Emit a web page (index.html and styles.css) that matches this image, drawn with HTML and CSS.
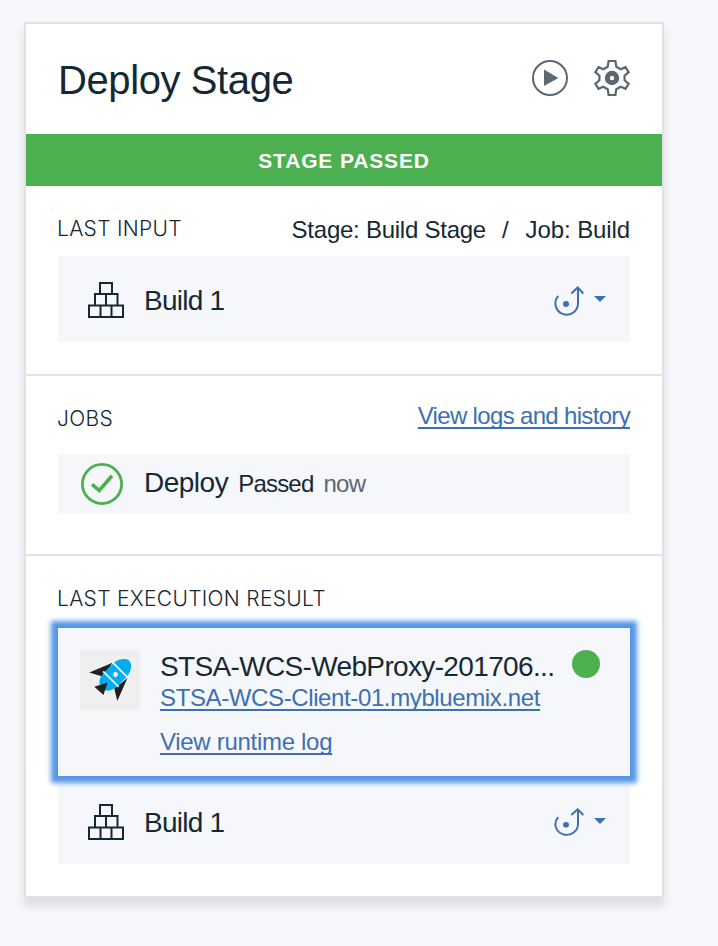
FILE: index.html
```html
<!DOCTYPE html>
<html lang="en">
<head>
<meta charset="utf-8">
<title>Deploy Stage</title>
<link rel="stylesheet" href="styles.css">
</head>
<body>
<svg width="0" height="0" class="defs" aria-hidden="true">
  <symbol id="blocks" viewBox="0 0 36 36"><path d="M12 1h12v11H12zM7 12h11v11.500H7zM18 12h11.500v11.500H18zM1 23.500h11.500V35H1zM12.500 23.500h11v11.500h-11zM23.500 23.500H35V35H23.500z" fill="none" stroke="currentColor" stroke-width="2"/></symbol>
  <symbol id="redeploy" viewBox="0 0 30 30" preserveAspectRatio="none"><path d="M4.300 9.800A11.300 11.300 0 1 0 24 17.500V2M17.300 7.500L23.700 1.500l5.600 6" fill="none" stroke="currentColor" stroke-width="2"/><circle cx="12" cy="18" r="3" fill="currentColor"/></symbol>
</svg>
<main class="card">
  <header class="head">
    <h1 class="title">Deploy Stage</h1>
    <svg class="icon play" viewBox="0 0 36 36"><circle cx="18" cy="18" r="17" fill="none" stroke="currentColor" stroke-width="2"/><path d="M12 9.500L26.300 18 12 26z" fill="currentColor"/></svg>
    <svg class="icon gear" viewBox="0 0 36 36"><path d="M14.600 1h6.800l.9 5.800 4.400 2.500 4.800-2.100 3.100 5-4 3.500v4.600l4 3.500-3.100 5-4.800-2.100-4.400 2.500-.9 5.800h-6.800l-.9-5.800-4.400-2.500-4.800 2.100-3.100-5 4-3.500v-4.600l-4-3.500 3.100-5 4.800 2.100 4.400-2.500z" fill="none" stroke="currentColor" stroke-width="2.200"/><circle cx="18" cy="18" r="4.700" fill="none" stroke="currentColor" stroke-width="5"/></svg>
  </header>
  <div class="banner">STAGE PASSED</div>
  <section class="section input">
    <div class="caption"><h2 class="label">LAST INPUT</h2><p class="source"><span class="stage">Stage: Build Stage</span><span class="slash">/</span><span class="job">Job: Build</span></p></div>
    <div class="row build">
      <svg class="blocks"><use href="#blocks"/></svg><span class="name">Build 1</span>
      <svg class="redeploy"><use href="#redeploy"/></svg><i class="caret"></i>
    </div>
  </section>
  <section class="section jobs">
    <div class="caption"><h2 class="label">JOBS</h2><a class="link history">View logs and history</a></div>
    <div class="row job-row">
      <svg class="check" viewBox="0 0 42 42"><circle cx="21" cy="21" r="19.600" fill="none" stroke="currentColor" stroke-width="2.800"/><path d="M11 21.300l7.300 6.200L31 12.800" fill="none" stroke="currentColor" stroke-width="3.600"/></svg>
      <span class="name deploy">Deploy</span><span class="status">Passed</span><span class="time">now</span>
    </div>
  </section>
  <section class="section result">
    <h2 class="label execution">LAST EXECUTION RESULT</h2>
    <div class="app">
      <svg class="rocket" viewBox="0 0 60 60"><rect width="60" height="60" rx="2" fill="#efefef"/><path d="M32.500 12.700L9.300 22.500l14 4.200zM47.500 28L34.300 38.500l3 12.500z" fill="#231f20"/><g transform="translate(35.500 24.500) rotate(45)"><path d="M-9.500-6C-9.500-12-6-17-3-18.500Q0-20.500 3-18.500C6-17 9.500-12 9.500-6V6C9.500 11 8 15 5 18H-5C-8 15-9.500 11-9.500 6z" fill="#00aeef"/><path d="M-11-6.500H11M-11 6.500H11" stroke="#efefef" stroke-width="1.800"/><circle r="2.500" fill="#efefef"/></g><path d="M27.500 32.500L14.300 36.700 23.500 45z" fill="#231f20"/></svg>
      <div class="details"><p class="name app-name">STSA-WCS-WebProxy-201706...</p><a class="link route">STSA-WCS-Client-01.mybluemix.net</a><a class="link log">View runtime log</a></div>
      <i class="dot"></i>
    </div>
    <div class="row build second">
      <svg class="blocks"><use href="#blocks"/></svg><span class="name">Build 1</span>
      <svg class="redeploy"><use href="#redeploy"/></svg><i class="caret"></i>
    </div>
  </section>
</main>
</body>
</html>
```
FILE: styles.css
```css
* { box-sizing: border-box; }
body { margin: 0; padding: 22px 0 0 24px; height: 946px; overflow: hidden; background: #f5f7fb; color: #152935; font-family: "Liberation Sans", Arial, sans-serif; }
h1, h2, p { margin: 0; font-weight: 400; }
svg { flex: none; }
.defs { position: absolute; }
.card { width: 640px; height: 876px; background: #fff; border: 2px solid #dfe3e6; box-shadow: 0 8px 8px rgba(0, 0, 0, .1); }
.head { height: 110px; padding: 0 32px; display: flex; align-items: center; color: #5a6872; }
.title { flex: 1; padding-top: 3px; font-size: 40px; letter-spacing: -.4px; color: #152935; white-space: nowrap; }
.icon { width: 36px; height: 36px; margin-bottom: 2px; }
.gear { margin-left: 26px; }
.banner { height: 52px; line-height: 54px; text-align: center; background: #4cb050; color: #fff; font-size: 21px; font-weight: 700; letter-spacing: .85px; }
.section { padding: 0 32px; }
.input { height: 190px; border-bottom: 2px solid #dfe3e6; }
.caption { display: flex; justify-content: space-between; height: 70px; line-height: 86px; white-space: nowrap; }
.label { margin-left: -1px; font-family: Inter, "Liberation Sans", sans-serif; font-weight: 300; font-size: 21px; letter-spacing: .3px; color: #152935; }
.source { display: flex; font-size: 24px; line-height: 88px; }
.stage { letter-spacing: -.25px; }
.job { letter-spacing: -.1px; }
.slash { margin: 0 17px 0 16px; }
.row { display: flex; align-items: center; background: #f5f7fb; }
.build { height: 86px; padding: 2px 24px 0 30px; }
.blocks { width: 36px; height: 36px; margin-right: 20px; color: #152935; }
.name { font-size: 28px; white-space: nowrap; letter-spacing: -.5px; }
.build .name { flex: 1; padding-top: 1px; letter-spacing: -.75px; }
.redeploy { width: 30px; height: 30px; margin: 2px 10px 0 0; color: #3d70b2; }
.caret { border: 6px solid transparent; border-top-color: #3d70b2; border-bottom: 0; margin-bottom: 3px; }
.jobs { height: 180px; border-bottom: 2px solid #dfe3e6; }
.jobs .caption { height: 78px; }
.link { color: #3d70b2; font-size: 24px; text-decoration: underline; text-decoration-thickness: 2px; text-decoration-skip-ink: none; text-underline-offset: 3px; white-space: nowrap; }
.history { line-height: 80px; letter-spacing: -.67px; }
.job-row { height: 60px; padding-left: 23px; }
.check { width: 42px; height: 42px; margin-right: 21px; color: #4cb050; }
.deploy { margin: 0 10px 2px 0; }
.status { font-size: 24px; margin-right: 10px; letter-spacing: -.8px; }
.time { font-size: 24px; letter-spacing: -.7px; color: #5a6872; }
.execution { height: 72px; line-height: 86px; }
.app { position: relative; display: flex; height: 148px; padding: 22px 30px 0 22px; background: #f5f7fb; box-shadow: 0 0 5px 7px #5596e6; }
.rocket { width: 60px; height: 60px; margin-right: 20px; }
.details { display: flex; flex-direction: column; align-items: flex-start; width: 412px; }
.app-name { line-height: 34px; letter-spacing: -.65px; }
.route { line-height: 28px; letter-spacing: -.38px; }
.log { line-height: 30px; margin-top: 15px; letter-spacing: -.3px; }
.dot { width: 28px; height: 28px; border-radius: 50%; background: #4cb050; }
.second { margin-top: 2px; }
.second .redeploy { height: 28px; margin-top: 0; }
```
